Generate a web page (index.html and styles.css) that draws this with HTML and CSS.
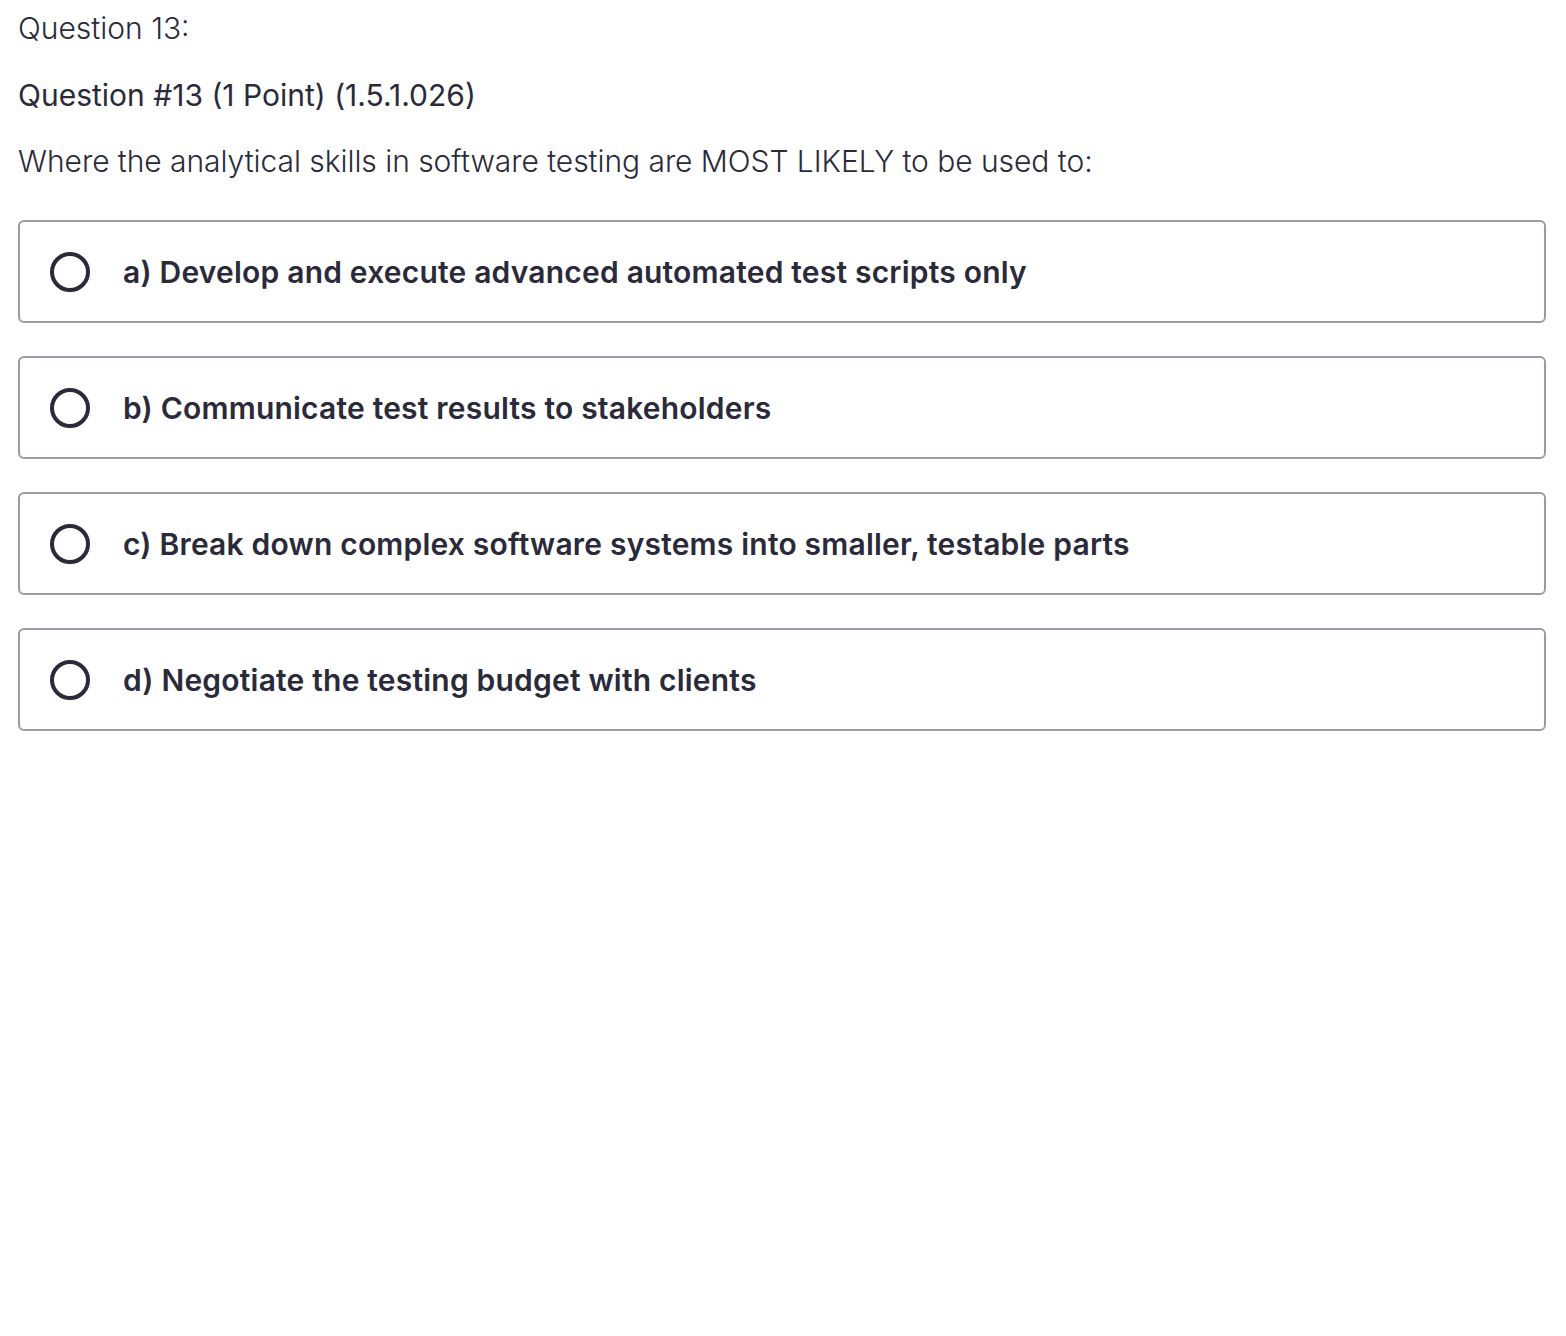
FILE: index.html
```html
<!DOCTYPE html>
<html>
<head>
<meta charset="utf-8">
<link rel="stylesheet" href="styles.css">
</head>
<body>
<div class="page">
  <div class="q-label">Question 13:</div>
  <div class="q-title">Question #13 (1 Point) (1.5.1.026)</div>
  <div class="q-text">Where the analytical skills in software testing are MOST LIKELY to be used to:</div>
  <div class="options">
    <div class="option"><span class="radio"></span><span class="opt-text">a) Develop and execute advanced automated test scripts only</span></div>
    <div class="option"><span class="radio"></span><span class="opt-text">b) Communicate test results to stakeholders</span></div>
    <div class="option"><span class="radio"></span><span class="opt-text">c) Break down complex software systems into smaller, testable parts</span></div>
    <div class="option"><span class="radio"></span><span class="opt-text">d) Negotiate the testing budget with clients</span></div>
  </div>
</div>
</body>
</html>
```
FILE: styles.css
```css
html, body {
  margin: 0;
  padding: 0;
  background: #ffffff;
}
body {
  font-family: Inter, "Noto Sans", sans-serif;
  color: #2b2a3a;
}
.page {
  padding: 8px 20px 0 18px;
}
.q-label {
  font-size: 30px;
  font-weight: 300;
  line-height: 40px;
}
.q-title {
  margin-top: 27px;
  font-size: 30px;
  font-weight: 400;
  line-height: 40px;
}
.q-text {
  margin-top: 26px;
  font-size: 30px;
  font-weight: 300;
  line-height: 40px;
  letter-spacing: -0.05px;
}
.options {
  margin-top: 39px;
  display: flex;
  flex-direction: column;
  gap: 33px;
}
.option {
  height: 103px;
  box-sizing: border-box;
  border: 2px solid #9a9aab;
  border-radius: 6px;
  display: flex;
  align-items: center;
  padding-left: 30px;
}
.radio {
  width: 40px;
  height: 40px;
  box-sizing: border-box;
  border: 4px solid #2b2a3a;
  border-radius: 50%;
  flex: none;
}
.opt-text {
  margin-left: 33px;
  font-size: 30px;
  font-weight: 600;
  letter-spacing: 0.2px;
}
```
